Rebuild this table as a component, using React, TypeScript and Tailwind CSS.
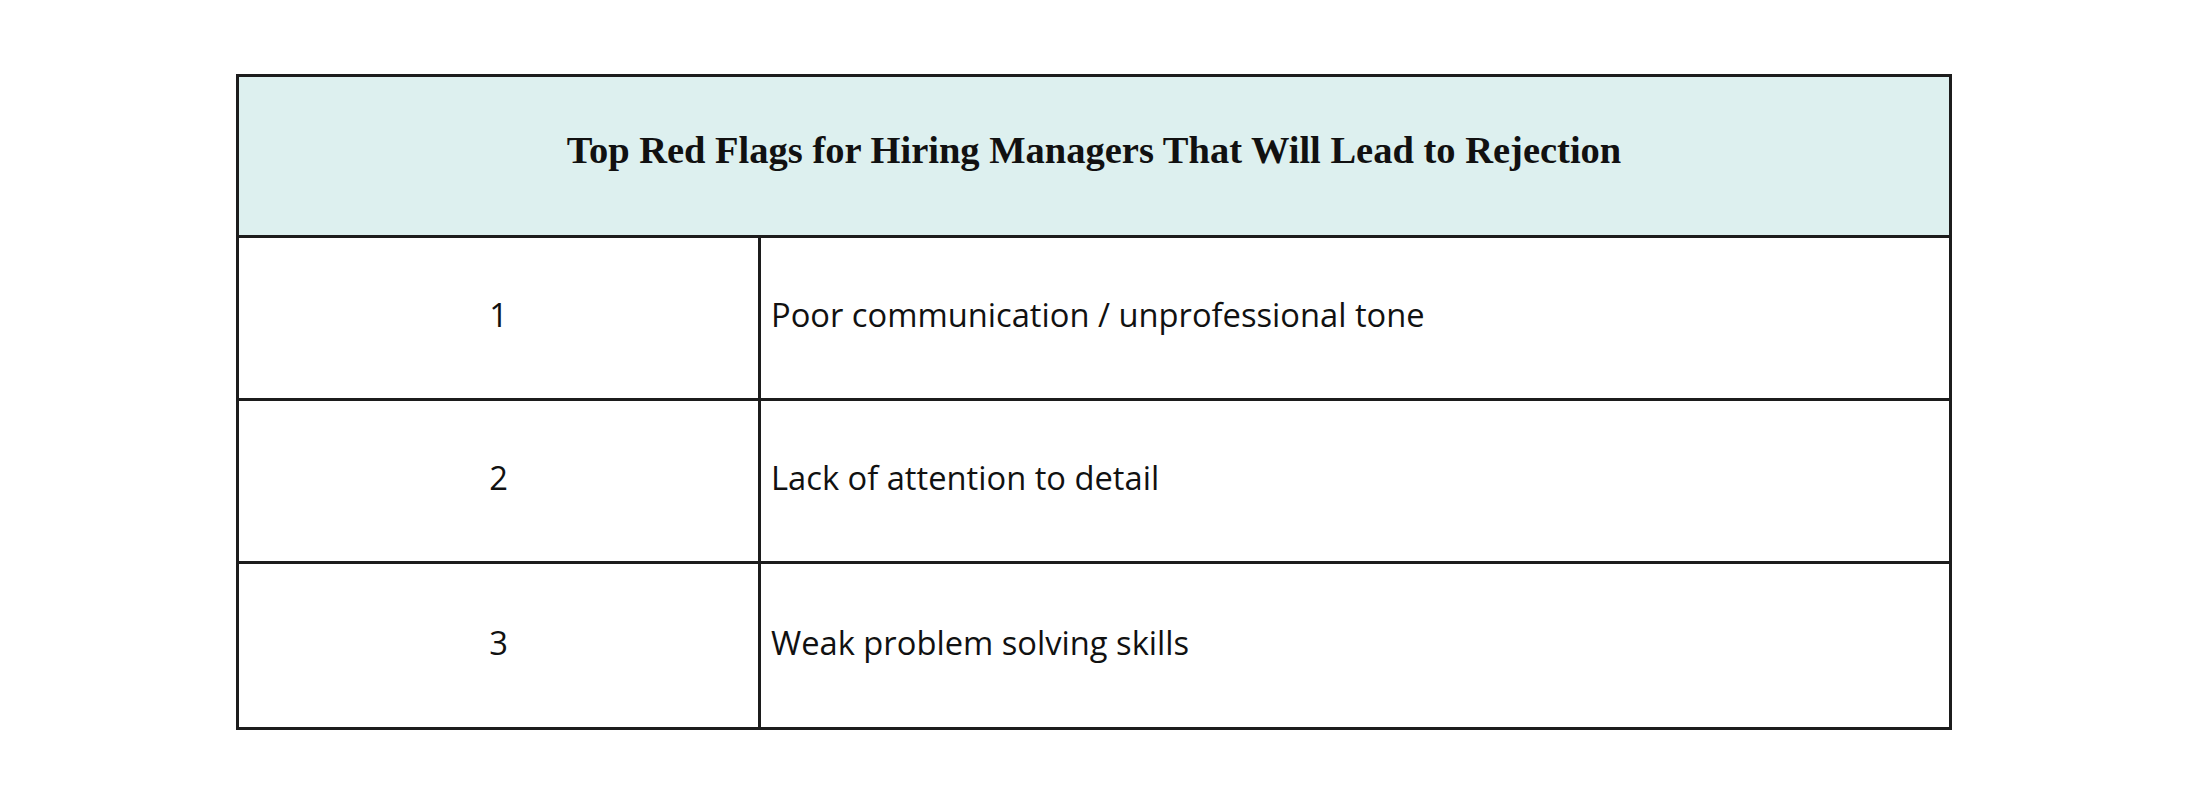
import React from 'react';

const rows = [
  { n: '1', text: 'Poor communication / unprofessional tone' },
  { n: '2', text: 'Lack of attention to detail' },
  { n: '3', text: 'Weak problem solving skills' },
];

export default function App() {
  return (
    <div className="w-[2188px] h-[800px] bg-white pt-[74px]">
      <div className="mx-auto w-[1716px] border-[3px] border-[#1c1c1c]">
        {/* header */}
        <div className="h-[161px] bg-[#ddf0ef] flex items-center justify-center border-b-[3px] border-[#1c1c1c]">
          <h1 className="font-['Liberation_Serif',serif] font-bold text-[38.5px] text-[#111] pb-[10px]">
            Top Red Flags for Hiring Managers That Will Lead to Rejection
          </h1>
        </div>
        {rows.map((r, i) => (
          <div
            key={r.n}
            className={`grid grid-cols-[522px_1fr] h-[163px] ${i < rows.length - 1 ? 'border-b-[3px] border-[#1c1c1c]' : ''}`}
          >
            <div className="flex items-center justify-center border-r-[3px] border-[#1c1c1c] font-['Open_Sans',sans-serif] text-[32.7px] text-[#111] pb-[6px]">
              {r.n}
            </div>
            <div className="flex items-center pl-[10px] font-['Open_Sans',sans-serif] text-[32.7px] text-[#111] pb-[6px]">
              {r.text}
            </div>
          </div>
        ))}
      </div>
    </div>
  );
}
